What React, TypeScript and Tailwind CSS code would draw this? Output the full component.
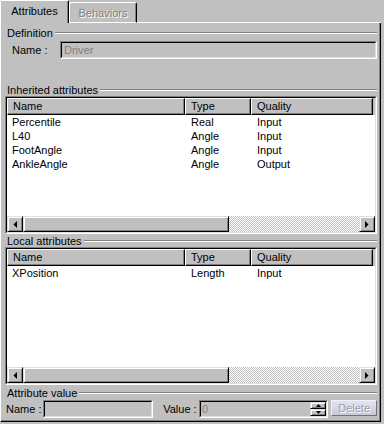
import React from "react";

const raised =
  "border border-t-white border-l-white border-b-black border-r-black shadow-[inset_-1px_-1px_0_#808080]";
const btnRaised =
  "border border-t-[#dfdfdf] border-l-[#dfdfdf] border-b-black border-r-black shadow-[inset_1px_1px_0_#ffffff,inset_-1px_-1px_0_#808080] bg-[#c0c0c0]";

function GroupHeader({ label, h }: { label: string; h: string }) {
  return (
    <div className={`flex items-center ${h}`}>
      <span className="ml-[2px] mr-[2px] leading-[12px] whitespace-nowrap">{label}</span>
      <div className="flex-1 border-t border-t-[#808080] border-b border-b-white" />
    </div>
  );
}

function Sunken({ className, children }: { className: string; children?: React.ReactNode }) {
  return (
    <div className={`border border-t-[#808080] border-l-[#808080] border-b-white border-r-white ${className}`}>
      <div className="h-full border border-t-black border-l-black border-b-[#dfdfdf] border-r-[#dfdfdf] flex">
        {children}
      </div>
    </div>
  );
}

function ArrowLeft() {
  return (
    <svg width="4" height="7" viewBox="0 0 4 7">
      <path d="M4 0 L4 7 L0.5 3.5 Z" fill="#000" />
    </svg>
  );
}
function ArrowRight() {
  return (
    <svg width="4" height="7" viewBox="0 0 4 7">
      <path d="M0 0 L0 7 L3.5 3.5 Z" fill="#000" />
    </svg>
  );
}

type Row = [string, string, string];

function ListBox({ rows }: { rows: Row[] }) {
  return (
    <div className="h-[138px] border border-t-[#808080] border-l-[#808080] border-b-white border-r-white">
      <div className="h-full border border-t-black border-l-black border-b-[#dfdfdf] border-r-[#dfdfdf] bg-white flex flex-col">
        <div className="h-[17px] flex bg-[#c0c0c0] shrink-0">
          <div className={`w-[178px] ${raised} pl-[5px] leading-[15px]`}>Name</div>
          <div className={`w-[66px] ${raised} pl-[5px] leading-[15px]`}>Type</div>
          <div className={`w-[122px] ${raised} pl-[5px] leading-[15px]`}>Quality</div>
          <div className="flex-1" />
        </div>
        <div className="flex-1 flex flex-col">
          {rows.map((r) => (
            <div key={r[0]} className="h-[14px] leading-[14px] flex">
              <div className="w-[178px] pl-[5px]">{r[0]}</div>
              <div className="w-[66px] pl-[6px]">{r[1]}</div>
              <div className="w-[122px] pl-[6px]">{r[2]}</div>
            </div>
          ))}
        </div>
        <div className="h-[16px] flex shrink-0">
          <div className={`w-[16px] h-[16px] ${btnRaised} flex items-center justify-center`}>
            <ArrowLeft />
          </div>
          <div className={`w-[206px] h-[16px] ${btnRaised}`} />
          <div className="flex-1 bg-[image:repeating-conic-gradient(#ffffff_0%_25%,#c0c0c0_0%_50%)] bg-[length:2px_2px]" />
          <div className={`w-[16px] h-[16px] ${btnRaised} flex items-center justify-center`}>
            <ArrowRight />
          </div>
        </div>
      </div>
    </div>
  );
}

export default function App() {
  const inherited: Row[] = [
    ["Percentile", "Real", "Input"],
    ["L40", "Angle", "Input"],
    ["FootAngle", "Angle", "Input"],
    ["AnkleAngle", "Angle", "Output"],
  ];
  const local: Row[] = [["XPosition", "Length", "Input"]];

  return (
    <div className="w-[384px] h-[424px] bg-[#c0c0c0] text-[11px] text-black font-['Liberation_Sans',Arial,sans-serif] overflow-hidden">
      {/* Tabs */}
      <div className="w-[381px] h-[23px] flex items-end">
        <div className="w-[69px] h-[23px] border-t border-l border-t-white border-l-white border-r border-r-black shadow-[inset_-1px_0_0_#808080] rounded-t-[2px] flex justify-center pt-[4px] leading-[12px]">
          Attributes
        </div>
        <div className="w-[68px] h-[21px] border-t border-l border-b border-t-white border-l-white border-b-white border-r border-r-black shadow-[inset_-1px_0_0_#808080] rounded-t-[2px] flex justify-center pt-[4px] leading-[12px] text-[#808080] [text-shadow:1px_1px_0_#ffffff]">
          Behaviors
        </div>
        <div className="flex-1 h-[1px] bg-white" />
      </div>

      {/* Panel */}
      <div className="w-[381px] h-[399px] border-l border-l-white border-r border-r-black border-b border-b-black shadow-[inset_-1px_-1px_0_#808080] pl-[4px] pr-[3px] flex flex-col">
        <div className="mt-[4px]">
          <GroupHeader label="Definition" h="h-[12px]" />
        </div>
        <div className="mt-[2px] flex items-center h-[18px]">
          <span className="ml-[7px] w-[48px]">Name :</span>
          <Sunken className="flex-1 h-[18px]">
            <span className="pl-[2px] leading-[14px] text-[#808080]">Driver</span>
          </Sunken>
        </div>

        <div className="mt-[25px]">
          <GroupHeader label="Inherited attributes" h="h-[12px]" />
        </div>
        <ListBox rows={inherited} />

        <GroupHeader label="Local attributes" h="h-[13px]" />
        <ListBox rows={local} />

        <div className="mt-[2px]">
          <GroupHeader label="Attribute value" h="h-[12px]" />
        </div>
        <div className="mt-[1px] flex items-center h-[18px]">
          <span className="ml-[1px] w-[37px]">Name :</span>
          <Sunken className="w-[111px] h-[18px]" />
          <span className="ml-[10px] w-[36px]">Value :</span>
          <Sunken className="w-[130px] h-[18px]">
            <span className="flex-1 pl-[1px] leading-[14px] text-[#808080]">0</span>
            <div className="w-[16px] flex flex-col">
              <div className={`h-[7px] ${btnRaised} flex items-center justify-center`}>
                <svg width="5" height="3" viewBox="0 0 5 3">
                  <path d="M0 3 L5 3 L2.5 0 Z" fill="#000" />
                </svg>
              </div>
              <div className={`h-[7px] ${btnRaised} flex items-center justify-center`}>
                <svg width="5" height="3" viewBox="0 0 5 3">
                  <path d="M0 0 L5 0 L2.5 3 Z" fill="#000" />
                </svg>
              </div>
            </div>
          </Sunken>
          <div className="ml-[3px] w-[46px] h-[16px] self-start border border-t-[#f0f0f8] border-l-[#f0f0f8] border-b-[#707080] border-r-[#707080] bg-[linear-gradient(#e4e4f0,#c8c8da)] flex items-center justify-center leading-[12px] text-[#9a9ab0] [text-shadow:1px_1px_0_#ffffff]">
            Delete
          </div>
        </div>
      </div>
    </div>
  );
}
